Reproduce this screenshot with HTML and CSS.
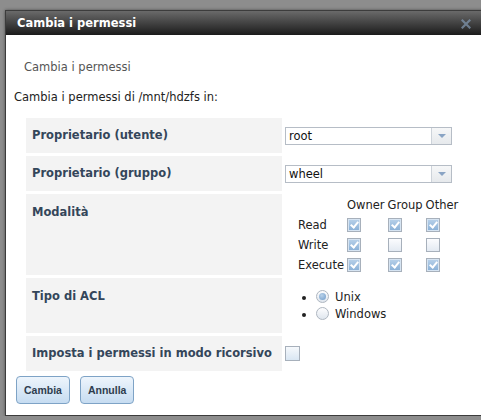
FILE: index.html
```html
<!DOCTYPE html>
<html>
<head>
  <title>Cambia i permessi</title>
  <link rel="stylesheet" href="styles.css">
</head>
<body>
  <div class="dialog">
    <div class="titlebar">
      <span class="title">Cambia i permessi</span>
      <span class="close">
        <svg width="10" height="10" viewBox="0 0 10 10">
          <path d="M1.5 1.5 L8.5 8.5 M8.5 1.5 L1.5 8.5" stroke="#7f95ad" stroke-width="2.2" stroke-linecap="square"/>
        </svg>
      </span>
    </div>
    <div class="dialog-body">
      <p class="heading">Cambia i permessi</p>
      <p class="intro">Cambia i permessi di /mnt/hdzfs in:</p>

      <table class="form-table">
        <tr>
          <th>Proprietario (utente)</th>
          <td>
            <div class="select"><span class="select-value">root</span><span class="select-arrow"></span></div>
          </td>
        </tr>
        <tr>
          <th>Proprietario (gruppo)</th>
          <td>
            <div class="select"><span class="select-value">wheel</span><span class="select-arrow"></span></div>
          </td>
        </tr>
        <tr>
          <th class="top">Modalità</th>
          <td class="mode-cell">
            <table class="mode-table">
              <tr><td></td><td>Owner</td><td>Group</td><td>Other</td></tr>
              <tr>
                <td>Read</td>
                <td><span class="cb on"></span></td>
                <td><span class="cb on"></span></td>
                <td><span class="cb on"></span></td>
              </tr>
              <tr>
                <td>Write</td>
                <td><span class="cb on"></span></td>
                <td><span class="cb"></span></td>
                <td><span class="cb"></span></td>
              </tr>
              <tr>
                <td>Execute</td>
                <td><span class="cb on"></span></td>
                <td><span class="cb on"></span></td>
                <td><span class="cb on"></span></td>
              </tr>
            </table>
          </td>
        </tr>
        <tr>
          <th class="top">Tipo di ACL</th>
          <td>
            <ul class="radio-list">
              <li><span class="radio on"></span>Unix</li>
              <li><span class="radio"></span>Windows</li>
            </ul>
          </td>
        </tr>
        <tr>
          <th>Imposta i permessi in modo ricorsivo</th>
          <td><span class="cb big"></span></td>
        </tr>
      </table>

      <div class="actions">
        <button class="btn">Cambia</button>
        <button class="btn">Annulla</button>
      </div>
    </div>
  </div>
</body>
</html>
```
FILE: styles.css
```css
body {
  margin: 0;
  background-color: #8d8d8d;
  font-family: "DejaVu Sans", Verdana, sans-serif;
  font-size: 11.5px;
  line-height: 14px;
  color: #222;
  overflow: hidden;
}

.dialog {
  margin: 10px 0 0 5px;
  width: 480px;
  background-color: #fff;
  border: 1px solid #3c3c3c;
  box-shadow: 0 0 3px rgba(0, 0, 0, 0.45);
}

.titlebar {
  display: flex;
  align-items: center;
  height: 24px;
  padding-left: 11px;
  background: linear-gradient(#6a6a6a, #1b1b1b);
}

.titlebar .title {
  color: #fff;
  font-weight: bold;
}

.titlebar .close {
  margin-left: auto;
  margin-right: 15px;
  height: 10px;
  opacity: 0.75;
}

.dialog-body {
  padding: 0 8px 11px;
}

.heading {
  margin: 25px 0 0 10px;
  color: #555;
}

.intro {
  margin: 16px 0 0;
}

/* main form table */
.form-table {
  margin: 11px 0 0 12px;
  border-spacing: 0 3px;
}

.form-table th {
  width: 244px;
  padding: 10px 6px 11px;
  text-align: left;
  font-weight: bold;
  color: #34465a;
  background-color: #f3f3f3;
  white-space: nowrap;
}

.form-table th.top {
  vertical-align: top;
  padding-top: 11px;
}

.form-table > tbody > tr > td {
  padding: 0 0 0 3px;
  vertical-align: middle;
}

.form-table td.mode-cell {
  vertical-align: top;
  padding-top: 1px;
}

.select {
  display: flex;
  width: 165px;
  height: 16px;
  border: 1px solid #b6bdc6;
  background-color: #fff;
}

.select-value {
  flex: 1;
  padding-left: 3px;
  line-height: 16px;
  color: #111;
}

.select-arrow {
  width: 19px;
  border-left: 1px solid #cdd3da;
  background: linear-gradient(#f6f7f8, #e6e9ec);
  display: flex;
  align-items: center;
  justify-content: center;
}

.select-arrow::after {
  content: "";
  border-left: 4px solid transparent;
  border-right: 4px solid transparent;
  border-top: 4px solid #8aa4c4;
}

/* permission grid */
.mode-table {
  margin-left: 13px;
  border-spacing: 0;
}

.mode-table td {
  height: 20px;
  padding: 0 3px 0 0;
  vertical-align: middle;
}

.cb {
  display: inline-block;
  width: 12px;
  height: 12px;
  border: 1px solid #a7b0bb;
  background: linear-gradient(#fbfcfe, #e3eaf2);
  vertical-align: middle;
  position: relative;
}

.cb.on {
  background: linear-gradient(#b9d2ea, #88afd6);
  box-shadow: inset 0 0 0 1px #d6e4f2;
}

.cb.on::after {
  content: "";
  position: absolute;
  left: 4px;
  top: 1px;
  width: 3px;
  height: 6px;
  border: solid #fff;
  border-width: 0 2px 2px 0;
  transform: rotate(40deg);
}

.cb.big {
  width: 13px;
  height: 13px;
  background: linear-gradient(#f6f9fc, #d9e6f3);
}

/* ACL radio list */
.radio-list {
  margin: 11px 0 10px;
  padding-left: 31px;
}

.radio-list li {
  height: 17px;
  line-height: 17px;
}

.radio {
  display: inline-block;
  width: 11px;
  height: 11px;
  margin-right: 6px;
  border: 1px solid #aeb6c0;
  border-radius: 50%;
  background: linear-gradient(#fdfdfe, #dfe6ee);
  vertical-align: -2px;
  position: relative;
}

.radio.on::after {
  content: "";
  position: absolute;
  left: 2px;
  top: 2px;
  width: 7px;
  height: 7px;
  border-radius: 50%;
  background: radial-gradient(circle at 40% 35%, #b9d2ea, #6f9bc9);
}

.actions {
  margin-top: 2px;
  padding-left: 2px;
  display: flex;
  gap: 10px;
}

.btn {
  height: 28px;
  padding: 0 7px;
  font-family: "Liberation Sans", Arial, sans-serif;
  font-size: 10.5px;
  font-weight: bold;
  color: #2e3d4e;
  background: linear-gradient(#eef5fc, #c6dcf1);
  border: 1px solid #7ea3c6;
  border-radius: 4px;
  cursor: pointer;
}

.btn:hover {
  background: linear-gradient(#f4f9fe, #d4e5f6);
}
```
